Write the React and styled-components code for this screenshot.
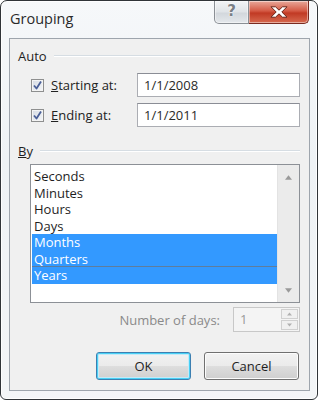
import React from 'react';
import styled, { createGlobalStyle } from 'styled-components';

const GlobalStyle = createGlobalStyle`
  html, body {
    margin: 0;
    padding: 0;
    background: #ffffff;
  }
  * {
    box-sizing: border-box;
  }
`;

const Window = styled.div`
  width: 318px;
  height: 400px;
  border: 1px solid #303438;
  border-radius: 7px 7px 6px 6px;
  background: linear-gradient(180deg, #f6f8fa 0%, #eef2f5 40%, #f3f5f7 100%);
  box-shadow: inset 0 0 0 1px rgba(255, 255, 255, 0.85);
  display: flex;
  flex-direction: column;
  font-family: "Open Sans", "Noto Sans", "Liberation Sans", sans-serif;
  font-size: 12px;
  color: #1e1e1e;
  overflow: hidden;
`;

const TitleBar = styled.div`
  height: 37px;
  display: flex;
  justify-content: space-between;
  align-items: flex-start;
`;

const Title = styled.div`
  padding: 8px 0 0 9px;
  font-size: 14.5px;
  color: #2a2a2a;
`;

const Caption = styled.div`
  display: flex;
  margin-right: 8px;
`;

const CaptionButton = styled.div`
  height: 23px;
  width: ${(p) => p.w}px;
  display: flex;
  align-items: center;
  justify-content: center;
  border: 1px solid ${(p) => (p.close ? '#7a2a20' : '#8a8f95')};
  border-top: none;
  border-radius: ${(p) => (p.close ? '0 0 5px 0' : '0 0 0 5px')};
  border-left: ${(p) => (p.close ? 'none' : '1px solid #8a8f95')};
  background: ${(p) =>
    p.close
      ? 'linear-gradient(180deg, #e8a89a 0%, #d45a45 45%, #c13a24 55%, #d76a50 100%)'
      : 'linear-gradient(180deg, #f2f4f6 0%, #dfe3e7 50%, #d2d7dc 55%, #e4e8ec 100%)'};
  box-shadow: inset 0 0 0 1px rgba(255, 255, 255, 0.45);
`;

const HelpGlyph = styled.span`
  font-family: "DejaVu Sans", sans-serif;
  font-weight: bold;
  font-size: 15px;
  color: #7a7f86;
  text-shadow: 0 0 1px #fff, 0 0 2px #fff;
  line-height: 1;
  margin-top: -2px;
`;

const Client = styled.div`
  flex: 1;
  margin: 0 7px 8px 8px;
  border: 1px solid #9ea5ad;
  background: #f0f0f0;
  display: flex;
  flex-direction: column;
`;

const Section = styled.div`
  display: flex;
  align-items: center;
  gap: 7px;
  height: 16px;
  margin-top: ${(p) => p.top}px;
  padding: 0 9px 0 8px;
  font-size: 13px;
`;

const SectionLine = styled.div`
  flex: 1;
  border-top: 1px solid #d6dde3;
  border-bottom: 1px solid #ffffff;
`;

const FieldRow = styled.div`
  display: flex;
  align-items: center;
  height: 24px;
  margin-top: ${(p) => p.top}px;
  padding: 0 9px 0 21px;
`;

const Check = styled.div`
  width: 13px;
  height: 13px;
  border: 1px solid #8e8f8f;
  background: linear-gradient(135deg, #d6dbe3 0%, #f4f6f8 100%);
  box-shadow: inset 0 0 0 1px #f4f4f4;
  display: flex;
  align-items: center;
  justify-content: center;
`;

const FieldLabel = styled.div`
  width: 86px;
  margin-left: 7px;
  font-size: 13px;
  color: #222;
`;

const TextBox = styled.div`
  flex: 1;
  height: 24px;
  border: 1px solid #abadb3;
  border-top-color: #8a8d95;
  background: #ffffff;
  display: flex;
  align-items: center;
  padding-left: 6px;
  font-size: 13px;
  color: #2a2a2a;
`;

const ListBox = styled.div`
  height: 139px;
  margin: 5px 9px 0 20px;
  border: 1px solid #8c9096;
  background: #ffffff;
  display: flex;
`;

const Items = styled.div`
  flex: 1;
  padding: 3px 0 0 1px;
`;

const Item = styled.div`
  height: 16.5px;
  line-height: 16.5px;
  padding-left: 2px;
  font-size: 13px;
  color: ${(p) => (p.selected ? '#ffffff' : '#1e1e1e')};
  background: ${(p) => (p.selected ? '#3399ff' : 'transparent')};
  border-bottom: ${(p) => (p.focus ? '1px solid #5f7d9c' : 'none')};
`;

const ScrollBar = styled.div`
  width: 22px;
  background: #ebebeb;
  border-left: 1px solid #e3e3e3;
  display: flex;
  flex-direction: column;
  justify-content: space-between;
  align-items: center;
  padding: 10px 0 9px;
`;

const DaysRow = styled.div`
  display: flex;
  align-items: center;
  justify-content: flex-end;
  margin-top: 4px;
  padding-right: 9px;
`;

const DaysLabel = styled.div`
  margin-right: 13px;
  font-size: 13px;
  color: #8a8a8a;
`;

const Spinner = styled.div`
  width: 67px;
  height: 25px;
  border: 1px solid #c8c8c8;
  background: #f4f4f4;
  display: flex;
`;

const SpinValue = styled.div`
  flex: 1;
  padding-left: 6px;
  line-height: 23px;
  font-size: 13px;
  color: #9a9a9a;
`;

const SpinButtons = styled.div`
  width: 18px;
  display: flex;
  flex-direction: column;
  padding: 1px 1px 1px 0;
  gap: 1px;
`;

const SpinButton = styled.div`
  flex: 1;
  border: 1px solid #d0d0d0;
  background: #f0f0f0;
  display: flex;
  align-items: center;
  justify-content: center;
`;

const ButtonRow = styled.div`
  display: flex;
  justify-content: flex-end;
  gap: 13px;
  margin-top: 20px;
  padding-right: 10px;
`;

const Button = styled.div`
  width: 95px;
  height: 28px;
  border: 1px solid ${(p) => (p.primary ? '#3c7fb1' : '#707070')};
  border-radius: 3px;
  background: linear-gradient(180deg, #f2f2f2 0%, #ebebeb 48%, #dddddd 52%, #cfcfcf 100%);
  box-shadow: ${(p) =>
    p.primary ? 'inset 0 0 0 1px #48d0f5, inset 0 0 0 2px #c5e9f7' : 'inset 0 0 0 1px #fcfcfc'};
  display: flex;
  align-items: center;
  justify-content: center;
  font-size: 13px;
  color: #1e1e1e;
`;

const CheckMark = () => (
  <svg width="11" height="11" viewBox="0 0 11 11">
    <path d="M2 5.5 L4.5 8.5 L9 1.5" fill="none" stroke="#4a5f97" strokeWidth="1.8" strokeLinejoin="round" />
  </svg>
);

const Arrow = ({ down, color = '#9a9a9a', size = 7 }) => (
  <svg width={size} height={Math.ceil(size / 2) + 1} viewBox="0 0 8 5">
    <path d={down ? 'M0 0 L8 0 L4 5 Z' : 'M0 5 L8 5 L4 0 Z'} fill={color} />
  </svg>
);

const CloseGlyph = () => (
  <svg width="20" height="12" viewBox="0 0 20 12">
    <path
      d="M2 0.8 L6.5 0.8 L10 4.2 L13.5 0.8 L18 0.8 L12.8 6 L18 11.2 L13.5 11.2 L10 7.8 L6.5 11.2 L2 11.2 L7.2 6 Z"
      fill="#ffffff"
      stroke="#6b2418"
      strokeWidth="1"
      strokeLinejoin="round"
    />
  </svg>
);

const units = ['Seconds', 'Minutes', 'Hours', 'Days', 'Months', 'Quarters', 'Years'];
const selected = ['Months', 'Quarters', 'Years'];

export default function App() {
  return (
    <>
      <GlobalStyle />
      <Window>
        <TitleBar>
          <Title>Grouping</Title>
          <Caption>
            <CaptionButton w={35}>
              <HelpGlyph>?</HelpGlyph>
            </CaptionButton>
            <CaptionButton w={60} close>
              <CloseGlyph />
            </CaptionButton>
          </Caption>
        </TitleBar>
        <Client>
          <Section top={9}>
            Auto
            <SectionLine />
          </Section>
          <FieldRow top={9}>
            <Check>
              <CheckMark />
            </Check>
            <FieldLabel>
              <u>S</u>tarting at:
            </FieldLabel>
            <TextBox>1/1/2008</TextBox>
          </FieldRow>
          <FieldRow top={6}>
            <Check>
              <CheckMark />
            </Check>
            <FieldLabel>
              <u>E</u>nding at:
            </FieldLabel>
            <TextBox>1/1/2011</TextBox>
          </FieldRow>
          <Section top={16}>
            <span>
              <u>B</u>y
            </span>
            <SectionLine />
          </Section>
          <ListBox>
            <Items>
              {units.map((u) => (
                <Item key={u} selected={selected.includes(u)} focus={u === 'Quarters'}>
                  {u}
                </Item>
              ))}
            </Items>
            <ScrollBar>
              <Arrow />
              <Arrow down />
            </ScrollBar>
          </ListBox>
          <DaysRow>
            <DaysLabel>Number of days:</DaysLabel>
            <Spinner>
              <SpinValue>1</SpinValue>
              <SpinButtons>
                <SpinButton>
                  <Arrow size={5} color="#b0b0b0" />
                </SpinButton>
                <SpinButton>
                  <Arrow down size={5} color="#b0b0b0" />
                </SpinButton>
              </SpinButtons>
            </Spinner>
          </DaysRow>
          <ButtonRow>
            <Button primary>OK</Button>
            <Button>Cancel</Button>
          </ButtonRow>
        </Client>
      </Window>
    </>
  );
}
